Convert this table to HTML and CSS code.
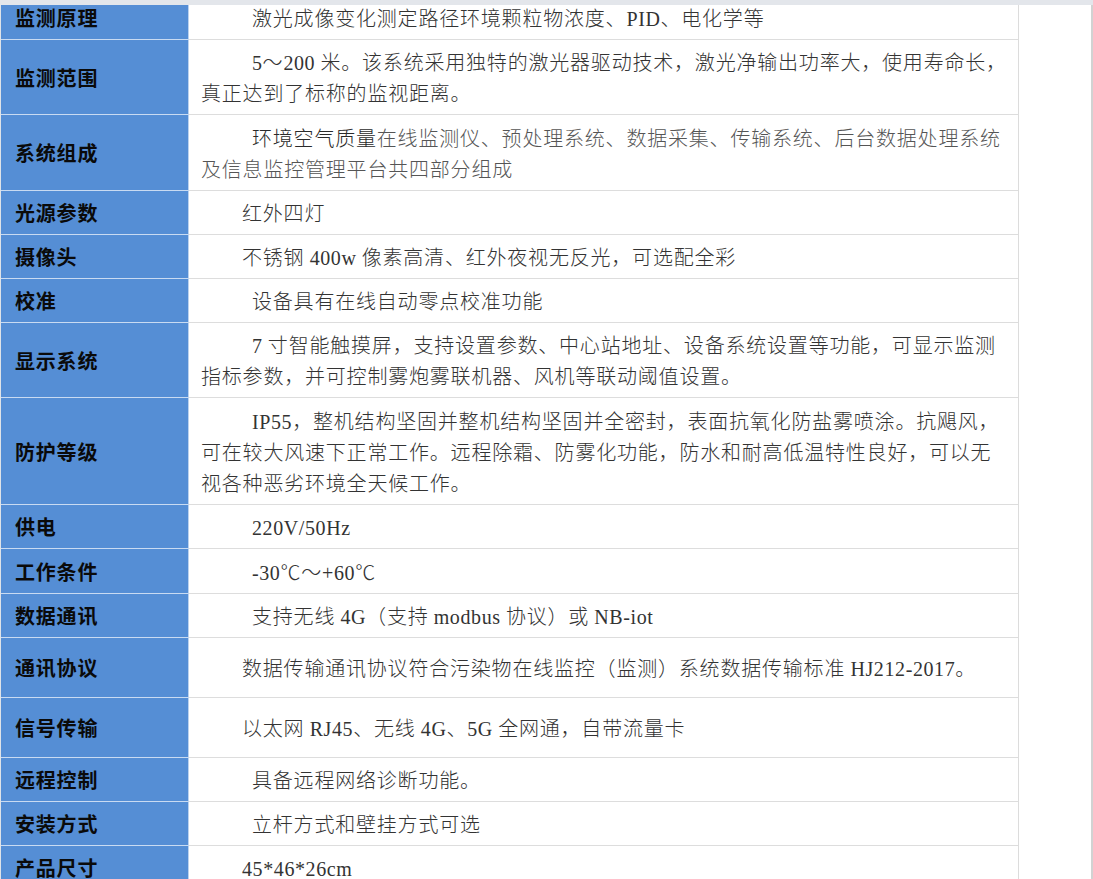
FILE: index.html
```html
<!DOCTYPE html>
<html lang="zh-CN">
<head>
<meta charset="utf-8">
<title>参数表</title>
<link rel="stylesheet" href="styles.css">
</head>
<body>
<div class="topbar"></div>
<div class="page">
  <div class="spec">
    <div class="row h45"><div class="label">监测原理</div><div class="val"><p class="ib">激光成像变化测定路径环境颗粒物浓度、<span class="lat">PID</span>、电化学等</p></div></div>
    <div class="row h75"><div class="label">监测范围</div><div class="val"><p class="ib"><span class="lat">5</span>～<span class="lat">200</span> 米。该系统采用独特的激光器驱动技术，激光净输出功率大，使用寿命长，<br>真正达到了标称的监视距离。</p></div></div>
    <div class="row h76"><div class="label">系统组成</div><div class="val"><p class="ib"><span class="dark">环境空气质量</span><span class="soft">在线监测仪、预处理系统、数据采集、传输系统、后台数据处理系统<br>及信息监控管理平台共四部分组成</span></p></div></div>
    <div class="row h44"><div class="label">光源参数</div><div class="val"><p class="ia">红外四灯</p></div></div>
    <div class="row h44"><div class="label">摄像头</div><div class="val"><p class="ia">不锈钢 <span class="lat">400w</span> 像素高清、红外夜视无反光，可选配全彩</p></div></div>
    <div class="row h44"><div class="label">校准</div><div class="val"><p class="ib">设备具有在线自动零点校准功能</p></div></div>
    <div class="row h75"><div class="label">显示系统</div><div class="val"><p class="ib"><span class="lat">7</span> 寸智能触摸屏，支持设置参数、中心站地址、设备系统设置等功能，可显示监测<br>指标参数，并可控制雾炮雾联机器、风机等联动阈值设置。</p></div></div>
    <div class="row h107"><div class="label">防护等级</div><div class="val"><p class="ib"><span class="lat">IP55</span>，整机结构坚固并整机结构坚固并全密封，表面抗氧化防盐雾喷涂。抗飓风，<br>可在较大风速下正常工作。远程除霜、防雾化功能，防水和耐高低温特性良好，可以无<br>视各种恶劣环境全天候工作。</p></div></div>
    <div class="row h44"><div class="label">供电</div><div class="val"><p class="ib"><span class="lat">220V/50Hz</span></p></div></div>
    <div class="row h45"><div class="label">工作条件</div><div class="val"><p class="ib"><span class="lat">-30</span>℃～<span class="lat">+60</span>℃</p></div></div>
    <div class="row h44"><div class="label">数据通讯</div><div class="val"><p class="ib">支持无线 <span class="lat">4G</span>（支持 <span class="lat">modbus</span> 协议）或 <span class="lat">NB-iot</span></p></div></div>
    <div class="row h60"><div class="label">通讯协议</div><div class="val"><p class="ia">数据传输通讯协议符合污染物在线监控（监测）系统数据传输标准 <span class="lat">HJ212-2017</span>。</p></div></div>
    <div class="row h60"><div class="label">信号传输</div><div class="val"><p class="ia">以太网 <span class="lat">RJ45</span>、无线 <span class="lat">4G</span>、<span class="lat">5G</span> 全网通，自带流量卡</p></div></div>
    <div class="row h44"><div class="label">远程控制</div><div class="val"><p class="ib">具备远程网络诊断功能。</p></div></div>
    <div class="row h44"><div class="label">安装方式</div><div class="val"><p class="ib">立杆方式和壁挂方式可选</p></div></div>
    <div class="row h44"><div class="label">产品尺寸</div><div class="val"><p class="ia"><span class="lat">45*46*26cm</span></p></div></div>
  </div>
  <div class="gutter"></div>
</div>
</body>
</html>
```

FILE: styles.css
```css
html, body {
  margin: 0;
  padding: 0;
  background: #ffffff;
  overflow: hidden;
}

.topbar {
  position: fixed;
  top: 0;
  left: 0;
  right: 0;
  height: 5px;
  background: #e3e6eb;
  z-index: 2;
}

.page {
  display: flex;
  width: 1093px;
  margin-top: -5px;
}

.spec {
  flex: none;
  display: flex;
  flex-direction: column;
  width: 1019px;
  box-sizing: border-box;
  border-left: 1px solid #dfe3e8;
  border-right: 1px solid #dcdcdc;
}

.row {
  display: grid;
  grid-template-columns: 188px 1fr;
  flex: none;
}

.h44 { height: 44px; }
.h45 { height: 45px; }
.h60 { height: 60px; }
.h75 { height: 75px; }
.h76 { height: 76px; }
.h107 { height: 107px; }

.label {
  box-sizing: border-box;
  display: flex;
  align-items: center;
  padding-left: 14px;
  background: #558ed5;
  border-right: 1px solid #bcd2ee;
  border-bottom: 1px solid #c9dbf2;
  color: #0a0a0a;
  font-family: "Noto Sans CJK SC", "Noto Sans", sans-serif;
  font-weight: 700;
  font-size: 20px;
  letter-spacing: 0.8px;
  white-space: nowrap;
}

.val {
  box-sizing: border-box;
  display: flex;
  align-items: center;
  padding: 0 12px;
  border-bottom: 1px solid #dddddd;
  color: #333333;
  font-family: "Noto Sans CJK SC", "Noto Sans", sans-serif;
  font-weight: 300;
  font-size: 20px;
  letter-spacing: 0.8px;
  white-space: nowrap;
}

.val p {
  margin: 0;
  line-height: 31px;
}

.lat {
  font-family: "Liberation Serif", serif;
  font-weight: 400;
  line-height: 20px;
  letter-spacing: 0.6px;
}

.ia {
  text-indent: 41px;
}

.ib {
  text-indent: 51px;
}

.dark {
  color: #2a2a2a;
}

.soft {
  color: #555555;
}

.gutter {
  flex: 1;
  border-right: 2px solid #d2d2d2;
  min-height: 900px;
}
```
